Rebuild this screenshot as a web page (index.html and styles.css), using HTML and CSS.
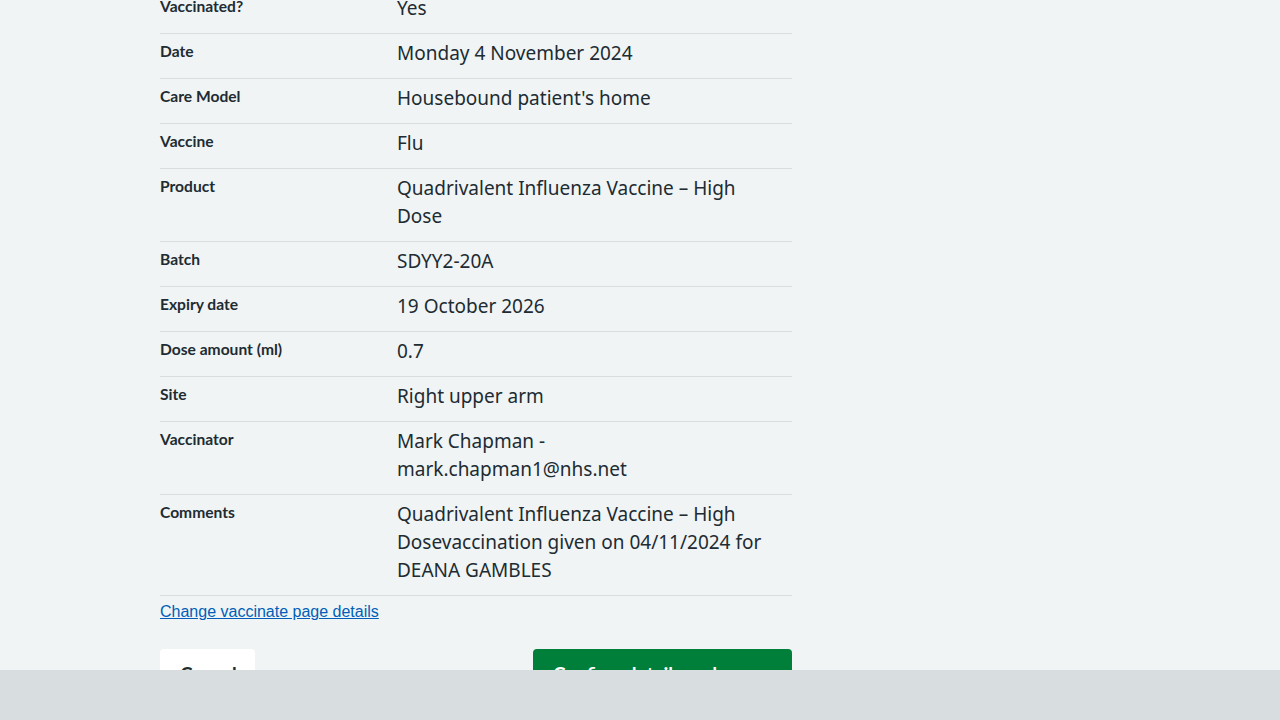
FILE: index.html
```html
<!DOCTYPE html>
<html lang="en">
<head>
<meta charset="utf-8">
<title>Check and confirm vaccination details</title>
<link rel="stylesheet" href="styles.css">
</head>
<body>
<main class="page">
  <dl class="summary">
    <div class="row"><dt class="key">Vaccinated?</dt><dd class="value">Yes</dd></div>
    <div class="row"><dt class="key">Date</dt><dd class="value">Monday 4 November 2024</dd></div>
    <div class="row"><dt class="key">Care Model</dt><dd class="value">Housebound patient's home</dd></div>
    <div class="row"><dt class="key">Vaccine</dt><dd class="value">Flu</dd></div>
    <div class="row"><dt class="key">Product</dt><dd class="value">Quadrivalent Influenza Vaccine – High Dose</dd></div>
    <div class="row"><dt class="key">Batch</dt><dd class="value">SDYY2-20A</dd></div>
    <div class="row"><dt class="key">Expiry date</dt><dd class="value">19 October 2026</dd></div>
    <div class="row"><dt class="key">Dose amount (ml)</dt><dd class="value">0.7</dd></div>
    <div class="row"><dt class="key">Site</dt><dd class="value">Right upper arm</dd></div>
    <div class="row"><dt class="key">Vaccinator</dt><dd class="value">Mark Chapman - mark.chapman1@nhs.net</dd></div>
    <div class="row"><dt class="key">Comments</dt><dd class="value">Quadrivalent Influenza Vaccine – High Dosevaccination given on 04/11/2024 for DEANA GAMBLES</dd></div>
  </dl>
  <p class="change"><a href="#" class="change-link">Change vaccinate page details</a></p>
  <div class="actions">
    <button class="btn btn-secondary" type="button">Cancel</button>
    <button class="btn btn-primary" type="button">Confirm details and save</button>
  </div>
</main>
<footer class="footer-bar"></footer>
</body>
</html>
```
FILE: styles.css
```css
html, body {
  margin: 0;
  padding: 0;
}
body {
  background: #f0f4f5;
  color: #212b32;
  font-family: "Noto Sans", "Open Sans", sans-serif;
}
.page {
  width: 632px;
  padding: 0 0 120px 160px;
}
.summary {
  margin: -11px 0 0;
  padding: 0;
}
.row {
  display: grid;
  grid-template-columns: 237px 1fr;
  border-bottom: 1px solid #d8dde0;
}
.key {
  margin: 0;
  padding: 5px 16px 0 0;
  font-family: Lato, "Noto Sans", sans-serif;
  font-weight: 700;
  font-size: 15.6px;
  line-height: 24px;
}
.value {
  margin: 0;
  padding: 5px 23px 11px 0;
  font-size: 19px;
  line-height: 28px;
}
.change {
  margin: 0;
  padding-top: 7px;
  font-family: "Liberation Sans", Arial, sans-serif;
  font-size: 16px;
}
.change-link {
  color: #005eb8;
  text-decoration: underline;
}
.actions {
  display: flex;
  justify-content: space-between;
  align-items: flex-start;
  margin-top: 28px;
}
.btn {
  font-family: Lato, "Noto Sans", sans-serif;
  font-weight: 700;
  font-size: 19px;
  line-height: 28px;
  border: 2px solid transparent;
  border-radius: 4px;
  padding: 9px 18px 15px;
  cursor: pointer;
}
.btn-secondary {
  background: #ffffff;
  color: #212b32;
  width: 95px;
}
.btn-primary {
  background: #007f3b;
  color: #ffffff;
  width: 259px;
  text-align: left;
}
.footer-bar {
  position: fixed;
  left: 0;
  right: 0;
  bottom: 0;
  height: 50px;
  background: #d8dde0;
}
```
